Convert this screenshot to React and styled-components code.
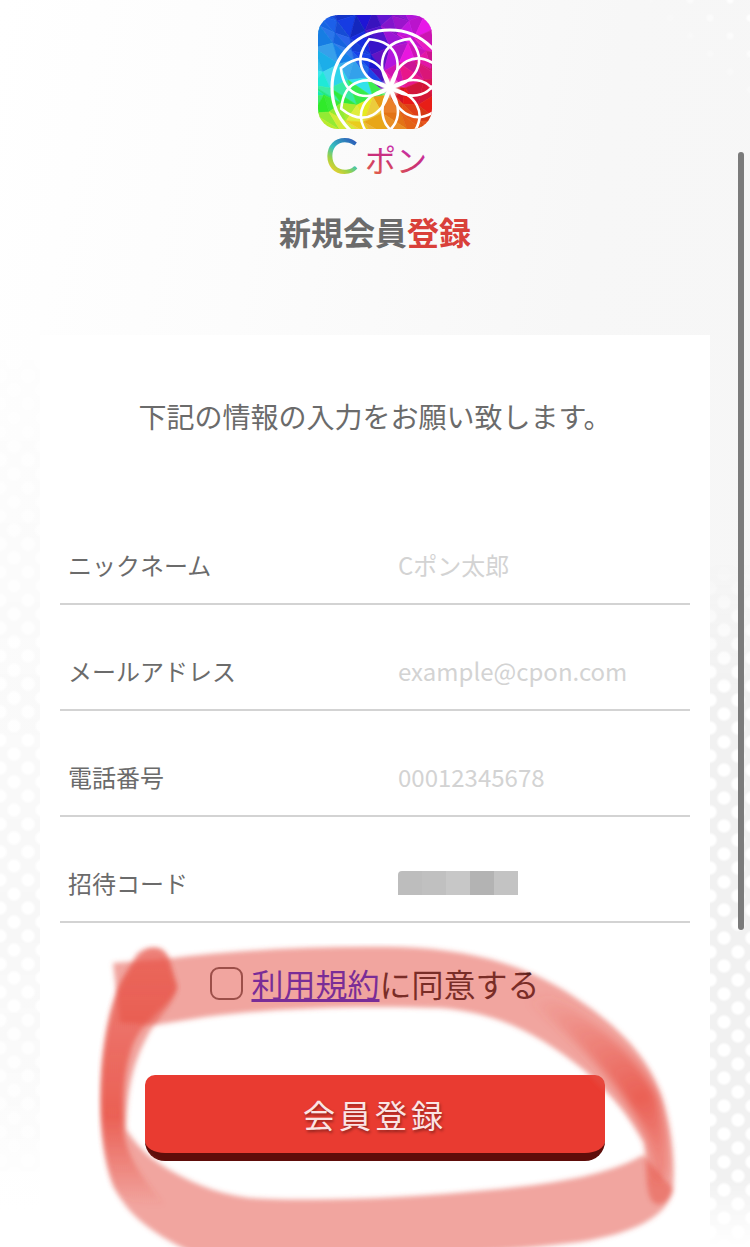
import { useState } from 'react';
import styled, { createGlobalStyle } from 'styled-components';

const FIELDS = [
  { id: 'nickname', label: 'ニックネーム', type: 'text', placeholder: 'Cポン太郎' },
  { id: 'email', label: 'メールアドレス', type: 'email', placeholder: 'example@cpon.com' },
  { id: 'tel', label: '電話番号', type: 'tel', placeholder: '00012345678' },
];

const MASK_COLORS = ['#bdbdbd', '#c0c0c0', '#c7c7c7', '#b3b3b3', '#c3c3c3'];

// [angle, hue, lightness] counterclockwise from the right side
const HUE_STOPS = [
  [0, 345, 48],
  [45, 308, 48],
  [80, 278, 42],
  [105, 238, 42],
  [130, 218, 52],
  [165, 186, 56],
  [180, 165, 54],
  [198, 115, 54],
  [215, 75, 54],
  [240, 54, 54],
  [280, 36, 54],
  [325, 15, 50],
  [360, -15, 48],
];

function getTileColor(x, y, shift) {
  const angle = ((Math.atan2(74 - y, x - 62) * 180) / Math.PI + 360) % 360;
  let i = 1;
  while (HUE_STOPS[i][0] < angle) i++;
  const [a, hueA, lightA] = HUE_STOPS[i - 1];
  const [b, hueB, lightB] = HUE_STOPS[i];
  const t = (angle - a) / (b - a);
  const hue = hueA + (hueB - hueA) * t;
  const light = lightA + (lightB - lightA) * t + shift;
  return `hsl(${Math.round((hue + 360) % 360)} 82% ${Math.round(light)}%)`;
}

function getTiles() {
  const step = 17;
  const point = (c, r) => [
    Math.round(c * step + Math.sin(c * 12.9 + r * 78.2) * 6),
    Math.round(r * step + Math.sin(c * 39.3 + r * 11.1) * 6),
  ];
  const tiles = [];
  for (let r = -1; r < 8; r++) {
    for (let c = -1; c < 8; c++) {
      const p = [point(c, r), point(c + 1, r), point(c + 1, r + 1), point(c, r + 1)];
      [[p[0], p[1], p[2]], [p[0], p[2], p[3]]].forEach((tri, i) => {
        const x = (tri[0][0] + tri[1][0] + tri[2][0]) / 3;
        const y = (tri[0][1] + tri[1][1] + tri[2][1]) / 3;
        const color = getTileColor(x, y, Math.sin(c * 7 + r * 13 + i * 4) * 4);
        tiles.push({ points: tri.join(' '), color });
      });
    }
  }
  return tiles;
}

const TILES = getTiles();
const PETALS = [22, 67, 112, 157, 202, 247, 292, 337];

function Logo() {
  return (
    <LogoSvg viewBox="0 0 114 176" role="img" aria-label="Cポン">
      <defs>
        <clipPath id="logo-clip">
          <rect width="114" height="114" rx="20" />
        </clipPath>
        <radialGradient id="logo-glow">
          <stop offset="0.3" stopColor="#fff" />
          <stop offset="1" stopColor="#fff" stopOpacity="0" />
        </radialGradient>
        <linearGradient id="logo-c" x1="0.8" y1="0.2" x2="0.5" y2="0.9">
          <stop offset="0" stopColor="#2b55b8" />
          <stop offset="0.5" stopColor="#35c3c0" />
          <stop offset="0.75" stopColor="#9bd246" />
          <stop offset="1" stopColor="#f0cf2c" />
        </linearGradient>
        <linearGradient id="logo-pon" x1="0.6" y1="0.2" x2="0.4" y2="0.9">
          <stop offset="0" stopColor="#c832b4" />
          <stop offset="0.5" stopColor="#c92f75" />
          <stop offset="1" stopColor="#df5a4c" />
        </linearGradient>
      </defs>
      <g clipPath="url(#logo-clip)">
        {TILES.map(({ points, color }) => (
          <polygon key={points} points={points} fill={color} stroke={color} strokeWidth="0.6" />
        ))}
        <g transform="translate(72 73)" fill="none" stroke="#fff">
          <circle r="58" strokeWidth="3.2" />
          {PETALS.map(deg => (
            <path
              key={deg}
              d="M0 0C-20 -14 -28 -38 0 -53C28 -38 20 -14 0 0Z"
              transform={`rotate(${deg})`}
              strokeWidth="2.6"
            />
          ))}
          <circle r="11" fill="url(#logo-glow)" stroke="none" />
        </g>
      </g>
      <LogoC x="7" y="159">C</LogoC>
      <LogoPon x="47" y="157">ポン</LogoPon>
    </LogoSvg>
  );
}

function Marker() {
  return (
    <MarkerSvg viewBox="0 0 600 320" aria-hidden="true">
      <defs>
        <filter id="marker-soft" x="-5%" y="-5%" width="110%" height="110%">
          <feGaussianBlur stdDeviation="2.5" />
        </filter>
        <filter id="marker-shade" x="-20%" y="-20%" width="140%" height="140%">
          <feGaussianBlur stdDeviation="5" />
        </filter>
        <linearGradient id="marker-left" x1="0" y1="0" x2="0" y2="1">
          <stop offset="0" stopColor="#e8493c" stopOpacity="0.4" />
          <stop offset="0.65" stopColor="#e8493c" stopOpacity="0.75" />
          <stop offset="1" stopColor="#e8493c" stopOpacity="0" />
        </linearGradient>
        <linearGradient id="marker-right" x1="0.2" y1="0" x2="0.5" y2="1">
          <stop offset="0" stopColor="#e8493c" stopOpacity="0" />
          <stop offset="0.7" stopColor="#e8493c" stopOpacity="0.75" />
          <stop offset="1" stopColor="#e8493c" stopOpacity="0.35" />
        </linearGradient>
      </defs>
      <g filter="url(#marker-soft)">
        <path
          fill="#e5554a"
          fillOpacity="0.53"
          d="M23 20L75 16C150 6 230 3 310 4C380 6 435 22 480 51C530 83 560 116 572 155C583 190 585 225 583 246C582 258 568 266 562 258C554 245 558 222 554 200C540 175 525 155 495 128C450 92 410 70 350 65C270 62 180 65 115 74L65 82L30 80Z"
        />
        <path
          fill="#e5554a"
          fillOpacity="0.53"
          d="M46 12C56 2 72 2 78 14L87 44C84 62 66 76 57 94C42 122 37 150 36 186C46 202 58 213 70 221C95 237 125 251 160 255C230 259 320 255 410 246C470 240 520 231 553 212L583 246C578 275 540 291 490 299C420 308 340 312 260 318L120 318C80 300 40 280 23 242C12 212 9 170 12 125C15 90 22 55 34 34Z"
        />
      </g>
      <path
        filter="url(#marker-soft)"
        fill="url(#marker-left)"
        d="M50 12C60 2 72 2 78 14L87 44C82 62 52 76 42 104C34 130 32 150 34 190C38 215 52 235 76 262C60 266 34 262 23 242C12 212 9 170 12 125C15 90 22 55 34 34Z"
      />
      <path
        filter="url(#marker-shade)"
        fill="url(#marker-right)"
        d="M440 40C520 85 552 118 568 155C578 190 580 220 576 232C572 240 566 240 564 232C562 222 560 208 557 196C545 165 510 115 440 60Z"
      />
    </MarkerSvg>
  );
}

function App() {
  const [agreed, setAgreed] = useState(false);

  return (
    <Page>
      <GlobalStyle />
      <TopDots />
      <LeftDots />
      <RightDots />
      <Header>
        <Logo />
        <Title>
          新規会員<TitleAccent>登録</TitleAccent>
        </Title>
      </Header>
      <Card onSubmit={e => e.preventDefault()}>
        <Lead>下記の情報の入力をお願い致します。</Lead>
        {FIELDS.map(({ id, label, type, placeholder }) => (
          <Row key={id}>
            <Label htmlFor={id}>{label}</Label>
            <Input id={id} type={type} placeholder={placeholder} />
          </Row>
        ))}
        <Row>
          <Label htmlFor="invite">招待コード</Label>
          <InviteField>
            <Input id="invite" type="text" />
            <Mask aria-hidden="true">
              {MASK_COLORS.map(color => (
                <MaskBlock key={color} $color={color} />
              ))}
            </Mask>
          </InviteField>
        </Row>
        <Actions>
          <Terms>
            <Checkbox
              id="agree"
              type="checkbox"
              checked={agreed}
              onChange={e => setAgreed(e.target.checked)}
            />
            <label htmlFor="agree">
              <TermsLink href="#terms">利用規約</TermsLink>に同意する
            </label>
          </Terms>
          <SubmitButton type="submit">会員登録</SubmitButton>
          <Marker />
        </Actions>
      </Card>
      <ScrollThumb />
    </Page>
  );
}
export default App;

const GlobalStyle = createGlobalStyle`
  * {
    box-sizing: border-box;
  }
  body {
    margin: 0;
    color: #6b6b6b;
    font-family: 'Noto Sans CJK JP', sans-serif;
  }
`;

const Page = styled.main`
  position: relative;
  z-index: 0;
  min-height: 100vh;
  padding: 15px 40px 34px;
  overflow: hidden;
  background: linear-gradient(transparent 85%, #ffffff 97%),
    linear-gradient(100deg, #ffffff 0%, #fcfcfc 30%, #f7f7f7 65%, #f6f6f6 100%);
`;

const Dots = styled.div`
  position: absolute;
  z-index: -1;
  background-image: radial-gradient(circle, #ffffff 5px, transparent 8px),
    radial-gradient(circle, #ffffff 5px, transparent 8px);
  background-size: 28px 28px;
  background-position: 0 0, 14px 14px;
`;

const TopDots = styled(Dots)`
  top: 0;
  right: 0;
  width: 100px;
  height: 110px;
  background-image: radial-gradient(circle, #ffffff 2px, transparent 5px),
    radial-gradient(circle, #ffffff 2px, transparent 5px);
  background-size: 40px 36px;
  background-position: 0 0, 20px 18px;
  mask-image: linear-gradient(to bottom left, #000, transparent 60%);
`;

const LeftDots = styled(Dots)`
  left: 0;
  top: 320px;
  bottom: 60px;
  width: 40px;
  background-color: #f7f7f7;
  mask-image: linear-gradient(transparent, rgba(0, 0, 0, 0.4) 30%, #000 70%, transparent);
`;

const RightDots = styled(Dots)`
  right: 0;
  top: 560px;
  bottom: 0;
  width: 40px;
  background-color: #f1f1f1;
  mask-image: linear-gradient(transparent, #000 20%, #000 90%, transparent);
`;

const Header = styled.header`
  display: flex;
  flex-direction: column;
  align-items: center;
`;

const LogoSvg = styled.svg`
  width: 114px;
  height: 176px;
`;

const LogoC = styled.text`
  font-family: Lato, sans-serif;
  font-weight: 400;
  font-size: 50px;
  fill: url(#logo-c);
`;

const LogoPon = styled.text`
  font-family: 'Noto Sans CJK JP', sans-serif;
  font-weight: 400;
  font-size: 31px;
  fill: url(#logo-pon);
`;

const Title = styled.h1`
  margin: 16px 0 0;
  font-weight: 700;
  font-size: 32px;
  line-height: 48px;
`;

const TitleAccent = styled.span`
  color: #d9403a;
`;

const Card = styled.form`
  margin-top: 80px;
  padding: 57px 20px 52px;
  background: #ffffff;
`;

const Lead = styled.p`
  margin: 0 0 59px;
  font-size: 28px;
  line-height: 48px;
  text-align: center;
`;

const Row = styled.div`
  display: flex;
  align-items: center;
  height: 106px;
  padding: 28px 8px 0;
  border-bottom: 2px solid #d3d3d3;
`;

const Label = styled.label`
  flex: 0 0 330px;
  font-size: 24px;
  line-height: 36px;
`;

const Input = styled.input`
  flex: 1;
  min-width: 0;
  width: 100%;
  height: 48px;
  padding: 0 0 2px;
  border: 0;
  outline: none;
  background: transparent;
  color: inherit;
  font-family: inherit;
  font-size: 24px;
  &::placeholder {
    color: #d3d3d3;
    opacity: 1;
  }
`;

const InviteField = styled.div`
  position: relative;
  display: flex;
  align-items: center;
  flex: 1;
`;

const Mask = styled.div`
  position: absolute;
  left: 0;
  display: flex;
  border-radius: 4px 0 0 0;
  overflow: hidden;
  pointer-events: none;
`;

const MaskBlock = styled.span`
  width: 24px;
  height: 24px;
  background: ${({ $color }) => $color};
`;

const Actions = styled.div`
  position: relative;
  display: flex;
  flex-direction: column;
  align-items: center;
  padding-top: 36px;
`;

const Terms = styled.div`
  display: flex;
  align-items: center;
  gap: 8px;
  font-size: 32px;
  line-height: 48px;
  color: #000000;
`;

const Checkbox = styled.input`
  appearance: none;
  width: 33px;
  height: 33px;
  margin: 0;
  border: 2px solid #4a4a4a;
  border-radius: 9px;
  background: transparent;
  &:checked {
    background: #4a4a4a;
  }
`;

const TermsLink = styled.a`
  color: #0000ee;
`;

const SubmitButton = styled.button`
  width: 460px;
  max-width: 100%;
  height: 86px;
  margin-top: 68px;
  padding: 0;
  border: 0;
  border-bottom: 8px solid #5e0d0a;
  border-radius: 10px 10px 20px 20px;
  background: #e93b31;
  color: #fbe4e4;
  font-family: inherit;
  font-weight: 400;
  font-size: 32px;
  letter-spacing: 4px;
  text-shadow: 1px 2px 3px rgba(0, 0, 0, 0.4);
`;

const MarkerSvg = styled.svg`
  position: absolute;
  top: 20px;
  left: 30px;
  width: 600px;
  height: 320px;
  pointer-events: none;
`;

const ScrollThumb = styled.div`
  position: absolute;
  top: 152px;
  right: 6px;
  width: 6px;
  height: 778px;
  border-radius: 3px;
  background: #7b7b7b;
`;
